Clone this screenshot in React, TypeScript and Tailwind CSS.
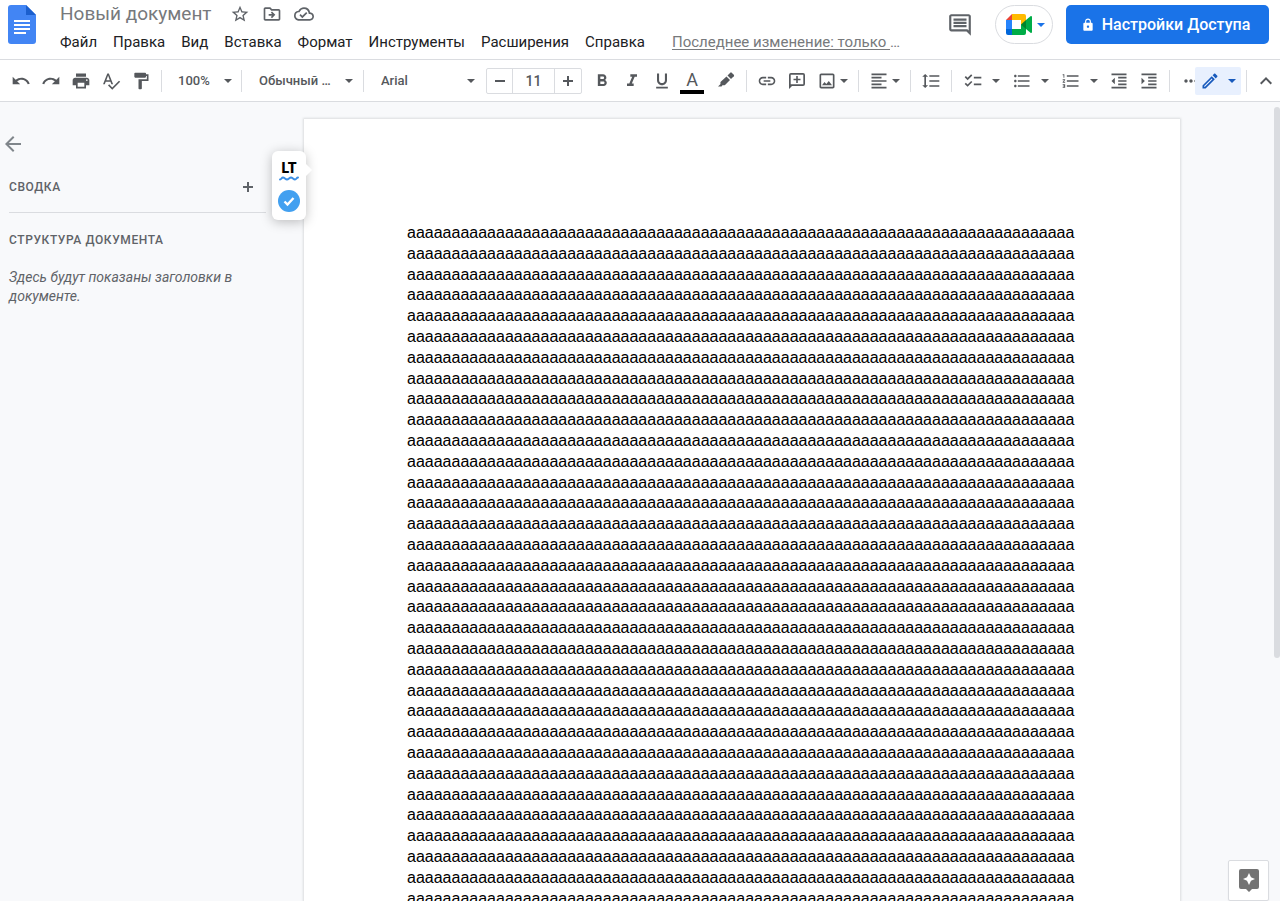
import { type ReactNode } from 'react';
import type { IconType } from 'react-icons';
import {
  MdArrowBack,
  MdChecklist,
  MdFormatAlignLeft,
  MdFormatBold,
  MdFormatIndentDecrease,
  MdFormatIndentIncrease,
  MdFormatItalic,
  MdFormatLineSpacing,
  MdFormatListBulleted,
  MdFormatListNumbered,
  MdFormatPaint,
  MdFormatUnderlined,
  MdKeyboardArrowUp,
  MdLink,
  MdLock,
  MdMoreHoriz,
  MdOutlineCloudDone,
  MdOutlineDriveFileMove,
  MdOutlineEdit,
  MdOutlineImage,
  MdOutlineInsertComment,
  MdPrint,
  MdRedo,
  MdSpellcheck,
  MdStarBorder,
  MdUndo,
} from 'react-icons/md';

const MENUS = ['Файл', 'Правка', 'Вид', 'Вставка', 'Формат', 'Инструменты', 'Расширения', 'Справка'];
const BODY_TEXT = 'a'.repeat(2508);

function Caret() {
  return (
    <svg viewBox="0 0 8 4" className="h-1 w-2 shrink-0" fill="currentColor" aria-hidden="true">
      <path d="M0 0h8L4 4z" />
    </svg>
  );
}

function Plus({ className }: { className: string }) {
  return (
    <svg viewBox="0 0 12 12" className={className} fill="none" stroke="currentColor" strokeWidth="2" aria-hidden="true">
      <path d="M6 1v10M1 6h10" />
    </svg>
  );
}

function Minus() {
  return (
    <svg viewBox="0 0 12 12" className="size-3" fill="none" stroke="currentColor" strokeWidth="2" aria-hidden="true">
      <path d="M1 6h10" />
    </svg>
  );
}

function Separator() {
  return <div className="mx-[5px] h-[22px] w-px shrink-0 bg-[#dadce0]" />;
}

function IconButton({ icon: Icon, label }: { icon: IconType; label: string }) {
  return (
    <button type="button" aria-label={label} className="flex h-7 w-[30px] shrink-0 items-center justify-center">
      <Icon size={20} />
    </button>
  );
}

function MenuButton({ icon: Icon, label, className }: { icon: IconType; label: string; className: string }) {
  return (
    <button type="button" aria-label={label} className={`flex h-7 shrink-0 items-center ${className}`}>
      <Icon size={20} className="shrink-0" />
      <Caret />
    </button>
  );
}

function ToolSelect({ label, value, className, width }: { label: string; value: string; className: string; width: string }) {
  return (
    <label className={`flex shrink-0 items-center ${className}`}>
      <select aria-label={label} className={`appearance-none bg-transparent text-[13px] font-medium outline-none ${width}`}>
        <option>{value}</option>
      </select>
      <Caret />
    </label>
  );
}

function DocsLogo() {
  return (
    <svg viewBox="0 0 28 39" className="h-[39px] w-7" aria-hidden="true">
      <path d="M3 0h15l10 10v26a3 3 0 0 1-3 3H3a3 3 0 0 1-3-3V3a3 3 0 0 1 3-3z" fill="#4285f4" />
      <path d="M18 0l10 10H18z" fill="#1b5fce" />
      <path d="M6 15h16v2H6zM6 19h16v2H6zM6 23h16v2H6zM6 27h12v2H6z" fill="#fff" />
    </svg>
  );
}

function MeetLogo() {
  return (
    <svg viewBox="0 0 26 21" className="h-[21px] w-[26px]" aria-hidden="true">
      <path d="M6 0v6H0z" fill="#ea4335" />
      <path d="M0 6h6v9H0z" fill="#2684fc" />
      <path d="M0 15h6v6H2a2 2 0 0 1-2-2z" fill="#0066da" />
      <path d="M6 0h12a2 2 0 0 1 2 2v8.500l-5 1V6H6z" fill="#ffba00" />
      <path d="M6 15h9v-4.500h5V19a2 2 0 0 1-2 2H6z" fill="#00ac47" />
      <path d="M20 6l4.500-3.700c.7-.5 1.500-.1 1.500.7v15c0 .8-.8 1.200-1.500.7L20 15z" fill="#00ac47" />
      <path d="M15 10.500L20 6v9z" fill="#00832d" />
    </svg>
  );
}

function AddCommentIcon() {
  return (
    <svg viewBox="0 0 20 20" className="size-5" fill="currentColor" aria-hidden="true">
      <path fillRule="evenodd" d="M16 2H4a2 2 0 0 0-2 2v14l3-3h11a2 2 0 0 0 2-2V4a2 2 0 0 0-2-2zm.3 11.300H3.700V3.700h12.600z" />
      <path d="M9.200 5h1.600v2.700h2.700v1.600h-2.700V12H9.200V9.300H6.500V7.700h2.700z" />
    </svg>
  );
}

function MarkerIcon() {
  return (
    <svg viewBox="0 0 20 20" className="size-5" fill="currentColor" aria-hidden="true">
      <path d="M11.500 4.500l2.800-2.800a1 1 0 0 1 1.400 0l2.100 2.100a1 1 0 0 1 0 1.400L15 8z" />
      <path d="M10.500 5.500l3.500 3.500-4.700 4.700c-.7.7-1.700.8-2.500.4L5.500 15.500H2l2.600-2.600c-.4-.8-.3-1.800.4-2.500z" />
    </svg>
  );
}

function ToolButton({ label, className = '', children }: { label: string; className?: string; children: ReactNode }) {
  return (
    <button type="button" aria-label={label} className={`flex h-7 w-[30px] shrink-0 items-center justify-center ${className}`}>
      {children}
    </button>
  );
}

function Header() {
  return (
    <header className="flex h-[60px] shrink-0 items-start border-b border-[#dadce0] bg-white">
      <a href="#home" aria-label="Документы" className="mt-[5px] ml-2 shrink-0">
        <DocsLogo />
      </a>
      <div className="ml-6 min-w-0">
        <div className="flex h-7 items-center text-[#5f6368]">
          <h1 className="text-[19px] text-[#77797c]">Новый документ</h1>
          <div className="ml-[18px] flex items-center gap-3">
            <button type="button" aria-label="Пометить">
              <MdStarBorder size={20} />
            </button>
            <button type="button" aria-label="Переместить">
              <MdOutlineDriveFileMove size={20} />
            </button>
            <button type="button" aria-label="Статус документа">
              <MdOutlineCloudDone size={20} />
            </button>
          </div>
        </div>
        <nav className="flex h-7 items-center gap-4 text-[15px] whitespace-nowrap text-[#202124]">
          {MENUS.map((m) => (
            <button key={m} type="button">
              {m}
            </button>
          ))}
          <a href="#history" className="ml-[11px] text-[#77797c]">
            <span className="underline underline-offset-2">Последнее изменение: только </span>…
          </a>
        </nav>
      </div>
      <div className="mr-[11px] ml-auto flex shrink-0 items-center pt-[5px]">
        <button type="button" aria-label="История комментариев" className="text-[#5f6368]">
          <MdOutlineInsertComment size={26} />
        </button>
        <button
          type="button"
          aria-label="Видеовстреча"
          className="ml-[22px] flex h-[39px] w-[58px] items-center justify-center gap-[5px] rounded-full border border-[#dadce0] pl-[3px] text-[#1a73e8]"
        >
          <MeetLogo />
          <Caret />
        </button>
        <button
          type="button"
          className="ml-[13px] flex h-[39px] w-[203px] items-center justify-center gap-[7px] rounded-[5px] bg-[#1a73e8] pr-1 text-base font-medium whitespace-nowrap text-white"
        >
          <MdLock size={14} />
          Настройки Доступа
        </button>
      </div>
    </header>
  );
}

function Toolbar() {
  return (
    <div role="toolbar" className="flex h-[42px] shrink-0 items-center overflow-hidden border-b border-[#dadce0] bg-white pl-[6px] text-[#55585c]">
      <IconButton icon={MdUndo} label="Отменить" />
      <IconButton icon={MdRedo} label="Повторить" />
      <IconButton icon={MdPrint} label="Печать" />
      <IconButton icon={MdSpellcheck} label="Проверка правописания" />
      <IconButton icon={MdFormatPaint} label="Копировать форматирование" />
      <Separator />
      <ToolSelect label="Масштаб" value="100%" className="pr-1 pl-[11px]" width="w-[46px]" />
      <Separator />
      <ToolSelect label="Стили" value="Обычный …" className="pr-[5px] pl-3" width="w-[86px]" />
      <Separator />
      <ToolSelect label="Шрифт" value="Arial" className="pr-[11px] pl-3" width="w-[86px]" />
      <div className="mr-[5px] flex h-[26px] w-24 shrink-0 divide-x divide-[#dadce0] rounded-xs border border-[#dadce0]">
        <button type="button" aria-label="Уменьшить размер шрифта" className="flex w-[26px] items-center justify-center">
          <Minus />
        </button>
        <input aria-label="Размер шрифта" defaultValue="11" className="w-full min-w-0 flex-1 bg-transparent text-center text-sm font-medium outline-none" />
        <button type="button" aria-label="Увеличить размер шрифта" className="flex w-[26px] items-center justify-center">
          <Plus className="size-3" />
        </button>
      </div>
      <IconButton icon={MdFormatBold} label="Полужирный" />
      <IconButton icon={MdFormatItalic} label="Курсив" />
      <IconButton icon={MdFormatUnderlined} label="Подчеркнутый" />
      <ToolButton label="Цвет текста" className="mr-1 flex-col pt-[2px]">
        <span className="text-lg leading-5">A</span>
        <span className="h-1 w-6 bg-black" />
      </ToolButton>
      <ToolButton label="Цвет выделения">
        <MarkerIcon />
      </ToolButton>
      <Separator />
      <IconButton icon={MdLink} label="Вставить ссылку" />
      <ToolButton label="Добавить комментарий">
        <AddCommentIcon />
      </ToolButton>
      <MenuButton icon={MdOutlineImage} label="Вставить изображение" className="gap-[3px] px-[5px]" />
      <Separator />
      <MenuButton icon={MdFormatAlignLeft} label="Выравнивание" className="gap-[3px] px-[5px]" />
      <Separator />
      <IconButton icon={MdFormatLineSpacing} label="Межстрочный интервал" />
      <Separator />
      <MenuButton icon={MdChecklist} label="Контрольный список" className="gap-[9px] px-[6px]" />
      <MenuButton icon={MdFormatListBulleted} label="Маркированный список" className="gap-[9px] px-[6px]" />
      <MenuButton icon={MdFormatListNumbered} label="Нумерованный список" className="gap-[9px] px-[6px]" />
      <IconButton icon={MdFormatIndentDecrease} label="Уменьшить отступ" />
      <IconButton icon={MdFormatIndentIncrease} label="Увеличить отступ" />
      <Separator />
      <div className="ml-auto flex shrink-0 items-center">
        <button type="button" aria-label="Ещё" className="flex h-7 w-[14px] items-center overflow-hidden">
          <MdMoreHoriz size={20} className="shrink-0" />
        </button>
        <button type="button" aria-label="Режим редактирования" className="flex h-7 w-[46px] items-center justify-center gap-2 rounded-xs bg-[#e8f0fe] text-[#185abc]">
          <MdOutlineEdit size={20} />
          <Caret />
        </button>
        <Separator />
        <button type="button" aria-label="Скрыть меню" className="flex h-7 w-7 items-center justify-center">
          <MdKeyboardArrowUp size={24} />
        </button>
      </div>
    </div>
  );
}

function Outline() {
  return (
    <aside className="w-[304px] shrink-0 pr-[38px] text-[#5f6368]">
      <button type="button" aria-label="Закрыть структуру" className="mt-[30px] ml-px block text-[#80868b]">
        <MdArrowBack size={24} />
      </button>
      <div className="ml-[9px]">
        <div className="flex h-[57px] items-center justify-between border-b border-[#dadce0] pt-[5px] pr-3">
          <h2 className="text-xs font-medium tracking-wider">СВОДКА</h2>
          <button type="button" aria-label="Добавить сводку">
            <Plus className="size-3" />
          </button>
        </div>
        <h2 className="mt-[17px] text-xs leading-5 font-medium tracking-wider">СТРУКТУРА ДОКУМЕНТА</h2>
        <p className="mt-[18px] text-sm leading-[19px] italic">Здесь будут показаны заголовки в документе.</p>
      </div>
    </aside>
  );
}

function LanguageToolWidget() {
  return (
    <div className="absolute top-[49px] left-[272px] flex h-[69px] w-[34px] flex-col items-center rounded-md bg-white shadow-[0_2px_12px_rgba(0,0,0,0.25)]">
      <span className="absolute top-[14px] -right-1 size-[10px] rotate-45 bg-white" />
      <div className="relative mt-[9px] flex flex-col items-center">
        <span className="text-sm leading-4 font-black text-black">LT</span>
        <svg viewBox="0 0 20 5" className="h-[5px] w-5" fill="none" stroke="#3b8ee5" strokeWidth="2" strokeLinecap="round" aria-hidden="true">
          <path d="M1 3.500c1.500 0 1.500-2 3-2s2.500 2 4 2 2.500-2 4-2 2.500 2 4 2 1.500-2 3-2" />
        </svg>
      </div>
      <svg viewBox="0 0 22 22" className="mt-[9px] size-[22px]" aria-hidden="true">
        <circle cx="11" cy="11" r="11" fill="#42a0f0" />
        <path d="M6.500 11.500l3 3 6-6.500" fill="none" stroke="#fff" strokeWidth="2.400" />
      </svg>
    </div>
  );
}

export default function App() {
  return (
    <div className="flex h-screen flex-col overflow-hidden bg-[#f8f9fb] font-[Roboto,sans-serif]">
      <Header />
      <Toolbar />
      <main className="relative flex min-h-0 flex-1 overflow-hidden">
        <Outline />
        <article className="mt-[17px] min-w-0 flex-1 bg-white px-[103px] pt-[104px] shadow-[0_0_2px_1px_rgba(60,64,67,0.15)]">
          <p className="font-['Liberation_Sans',Arial,sans-serif] text-base leading-[1.3] break-all text-black">{BODY_TEXT}</p>
        </article>
        <div className="flex w-[100px] shrink-0 justify-end">
          <div className="mt-[5px] h-[551px] w-[6px] rounded-full bg-[#dadce0]" />
        </div>
        <LanguageToolWidget />
        <button
          type="button"
          aria-label="Анализ данных"
          className="absolute right-[11px] bottom-0 flex size-[41px] items-center justify-center rounded-xs border border-[#dadce0] bg-white text-[#737373] shadow-xs"
        >
          <svg viewBox="0 0 20 23" className="h-[23px] w-5" fill="currentColor" aria-hidden="true">
            <path
              fillRule="evenodd"
              d="M2 0h16a2 2 0 0 1 2 2v16a2 2 0 0 1-2 2h-5l-3 3-3-3H2a2 2 0 0 1-2-2V2a2 2 0 0 1 2-2zm8 4L8 8.200 4 10l4 1.800L10 16l2-4.200 4-1.800-4-1.800z"
            />
          </svg>
        </button>
      </main>
    </div>
  );
}
